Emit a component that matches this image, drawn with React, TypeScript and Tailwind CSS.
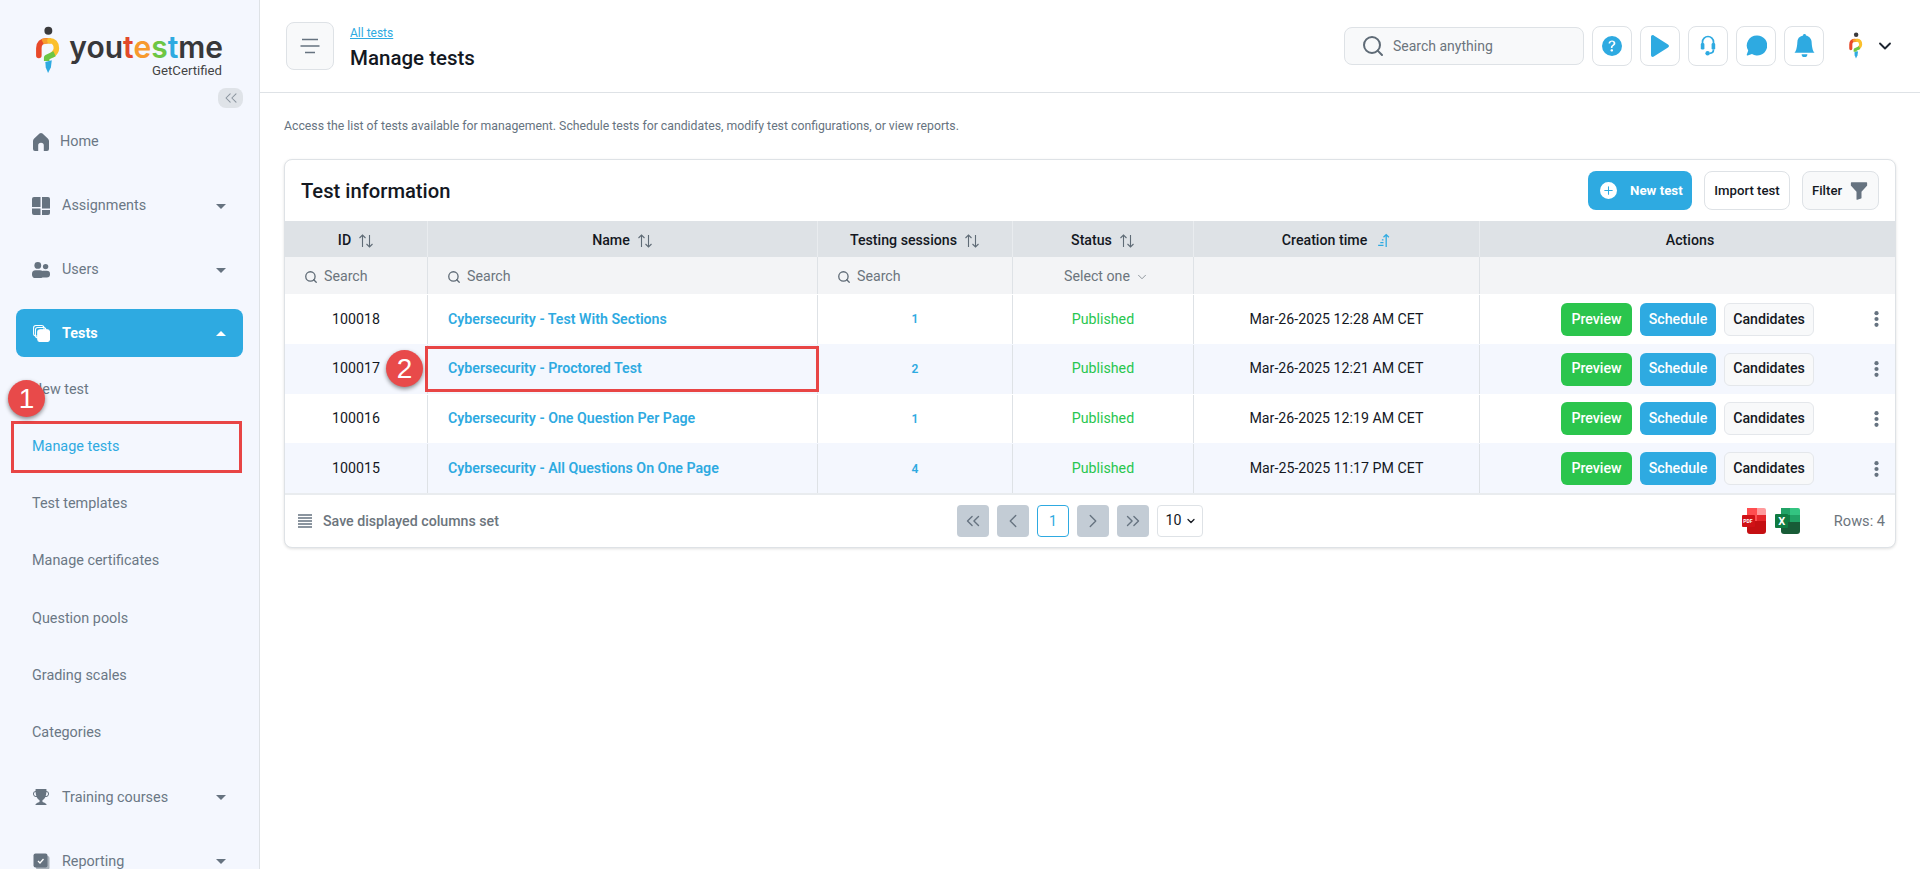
import { ChevronDown, ChevronLeft, ChevronRight, ChevronsLeft, ChevronsRight, Search } from "lucide-react";
import { BsBellFill, BsFunnelFill, BsPlusCircleFill, BsQuestionCircleFill, BsTrophyFill } from "react-icons/bs";

const columns = "grid grid-cols-[143px_390px_195px_181px_286px_1fr]";

const tests = [
    { id: "100018", name: "Cybersecurity - Test With Sections", sessions: "1", created: "Mar-26-2025 12:28 AM CET", alt: false },
    { id: "100017", name: "Cybersecurity - Proctored Test", sessions: "2", created: "Mar-26-2025 12:21 AM CET", alt: true },
    { id: "100016", name: "Cybersecurity - One Question Per Page", sessions: "1", created: "Mar-26-2025 12:19 AM CET", alt: false },
    { id: "100015", name: "Cybersecurity - All Questions On One Page", sessions: "4", created: "Mar-25-2025 11:17 PM CET", alt: true },
];

function LogoMark({ className }: { className: string }) {
    return (
        <svg viewBox="0 0 28 52" className={className} fill="none">
            <circle cx="13.3" cy="5.1" r="4.3" fill="#3a3a3c" />
            <path d="M3 32 V24 C3 19 6 16 11 16" stroke="#e8492a" strokeWidth="6" strokeLinecap="round" />
            <path d="M7 17 C9 16 12 16 16 16" stroke="#f79a2e" strokeWidth="6" />
            <path d="M15 16 C19 16 22 19 22 24 C22 27 20.5 29 18 31" stroke="#fbc02d" strokeWidth="6" strokeLinecap="round" />
            <path d="M20 30 L11.5 34 L11.5 38" stroke="#6cc644" strokeWidth="6" strokeLinejoin="round" />
            <path d="M10 39 L17 37 L16 45 L13 51 L10.5 45 Z" fill="#2eaae1" />
        </svg>
    );
}

function HomeIcon() {
    return (
        <svg viewBox="0 0 16 18" className="h-[18px] w-4" fill="#667380">
            <path d="M8 0 C8.6 0 9 0.2 9.5 0.6 L14.8 5.4 C15.6 6.1 16 7 16 8 V16 A2 2 0 0 1 14 18 H10.8 V12.5 A2.8 2.8 0 0 0 5.2 12.5 V18 H2 A2 2 0 0 1 0 16 V8 C0 7 0.4 6.1 1.2 5.4 L6.5 0.6 C7 0.2 7.4 0 8 0 Z" />
        </svg>
    );
}

function AssignIcon() {
    return (
        <svg viewBox="0 0 18 18" className="h-[18px] w-[18px]" fill="#667380">
            <path d="M2 0 H8.5 V10 H0 V2 A2 2 0 0 1 2 0 Z" />
            <path d="M10 0 H16 A2 2 0 0 1 18 2 V11.5 H10 Z" />
            <path d="M0 11.5 H8.5 V18 H2 A2 2 0 0 1 0 16 Z" />
            <path d="M10 13 H18 V16 A2 2 0 0 1 16 18 H10 Z" />
        </svg>
    );
}

function UsersIcon() {
    return (
        <svg viewBox="0 0 18 16" className="h-4 w-[18px]" fill="#667380">
            <circle cx="5.8" cy="3.4" r="3.4" />
            <circle cx="13.6" cy="4.6" r="2.7" />
            <rect x="0" y="8.2" width="11.5" height="7.8" rx="3.6" />
            <rect x="8" y="8.7" width="10" height="6.8" rx="3.2" />
        </svg>
    );
}

function TestsIcon() {
    return (
        <svg viewBox="0 0 18 18" className="h-[17px] w-[17px]" fill="none" stroke="#fff" strokeWidth="1.1">
            <rect x="0.6" y="0.6" width="11" height="11" rx="2.5" />
            <rect x="2.6" y="2.6" width="11" height="11" rx="2.5" />
            <rect x="5" y="5" width="12.5" height="12.5" rx="2.5" fill="#fff" />
        </svg>
    );
}

function ReportIcon() {
    return (
        <svg viewBox="0 0 17 17" className="h-[17px] w-[17px]" fill="none">
            <rect x="3" y="3" width="13.5" height="13.5" rx="2" fill="#a8b1ba" />
            <rect x="0.5" y="0.5" width="14" height="14" rx="2" fill="#667380" />
            <path d="M5 8 L7 10 L10.5 6" stroke="#fff" strokeWidth="1.3" />
        </svg>
    );
}

function NavItem({ icon, label, caret, gap }: { icon: React.ReactNode; label: string; caret?: boolean; gap: string }) {
    return (
        <div className="flex h-16 items-center pl-[32px] pt-[2px] text-[14.4px] text-[#6b7785]">
            <span className={`flex w-[18px] items-center justify-center ${gap}`}>{icon}</span>
            {label}
            {caret && <span className="ml-auto mr-[33px] h-0 w-0 border-x-[5px] border-t-[5px] border-x-transparent border-t-[#667380]" />}
        </div>
    );
}

function SubItem({ label, active }: { label: string; active?: boolean }) {
    return (
        <div className={`flex h-[57.2px] items-center pl-[32px] text-[14.4px] ${active ? "text-[#2eaae1]" : "text-[#6b7785]"}`}>
            {label}
        </div>
    );
}

function Sidebar() {
    return (
        <aside className="h-full w-[260px] shrink-0 overflow-hidden border-r border-[#dee2e6] bg-[#f4f7fe]">
            <div className="flex h-[88px] flex-col pl-[36px] pt-[26px]">
                <div className="flex items-start">
                    <LogoMark className="h-[48px] w-[26px] shrink-0" />
                    <div className="ml-[5px] flex w-[156px] flex-col items-end">
                        <div className="mt-[3px] font-['Inter',sans-serif] text-[30px] leading-[36px] font-semibold text-[#38383a]">
                            you<span className="text-[#e2492b]">t</span><span className="text-[#f79a2e]">e</span><span className="text-[#6cc644]">s</span><span className="text-[#2eaae1]">t</span>me
                        </div>
                        <div className="-mt-[2px] pr-[1px] text-[13.2px] leading-[15px] text-[#444]">GetCertified</div>
                    </div>
                </div>
            </div>
            <div className="flex justify-end pr-4">
                <div className="flex h-5 w-[25px] items-center justify-center rounded-lg bg-[#dfe3e8]">
                    <ChevronsLeft className="h-5 w-5 text-[#8a949e]" strokeWidth={1.25} />
                </div>
            </div>
            <div className="h-px" />
            <NavItem icon={<HomeIcon />} label="Home" gap="mr-[10px]" />
            <NavItem icon={<AssignIcon />} label="Assignments" caret gap="mr-[12px]" />
            <NavItem icon={<UsersIcon />} label="Users" caret gap="mr-[12px]" />
            <div className="flex h-16 items-center px-4">
                <div className="flex h-[48px] w-full items-center rounded-lg bg-[#2eaae1] pl-4 pt-[1px] text-[14.4px] font-bold text-white">
                    <span className="mr-[12px] flex w-[18px] justify-center"><TestsIcon /></span>
                    Tests
                    <span className="ml-auto mr-[17px] h-0 w-0 border-x-[5px] border-b-[5px] border-x-transparent border-b-white" />
                </div>
            </div>
            <div className="-mt-1">
                <SubItem label="New test" />
                <SubItem label="Manage tests" active />
                <SubItem label="Test templates" />
                <SubItem label="Manage certificates" />
                <SubItem label="Question pools" />
                <SubItem label="Grading scales" />
                <SubItem label="Categories" />
            </div>
            <div className="h-[3px]" />
            <NavItem icon={<BsTrophyFill className="h-[16px] w-[16px] text-[#667380]" />} label="Training courses" caret gap="mr-[12px]" />
            <NavItem icon={<ReportIcon />} label="Reporting" caret gap="mr-[12px]" />
        </aside>
    );
}

function IconBox({ children }: { children: React.ReactNode }) {
    return (
        <div className="flex h-10 w-10 items-center justify-center rounded-lg border border-[#dee2e6] bg-white text-[#2eaae1]">
            {children}
        </div>
    );
}

function TopBar() {
    return (
        <header className="flex h-[93px] shrink-0 items-center border-b border-[#dee2e6] pb-[1px] pl-[26px] pr-[25px]">
            <div className="flex h-12 w-12 items-center justify-center rounded-lg border border-[#dee2e6] bg-[#f8f9fa]">
                <svg viewBox="0 0 20 16" className="h-4 w-5" fill="none" stroke="#667380" strokeWidth="1.7">
                    <path d="M2 1.5 H18 M0.5 8 H19.5 M5 14.5 H15" />
                </svg>
            </div>
            <div className="ml-4 flex flex-col">
                <a className="mt-[4px] text-xs leading-[16px] text-[#2eaae1] underline">All tests</a>
                <h1 className="mt-[4px] text-[20.5px] leading-[26px] font-medium text-[#14181f]">Manage tests</h1>
            </div>
            <div className="ml-auto flex h-[38px] w-[240px] items-center rounded-lg border border-[#dee2e6] bg-[#f8f9fa] pl-[16px] text-sm text-[#6c757d]">
                <Search className="mr-2 h-6 w-6 text-[#5f6b76]" strokeWidth={2} />
                Search anything
            </div>
            <div className="ml-[8px] flex gap-2">
                <IconBox><BsQuestionCircleFill className="h-5 w-5" /></IconBox>
                <IconBox>
                    <svg viewBox="0 0 18 22" className="h-[22px] w-[18px]" fill="#2eaae1">
                        <path d="M0 2 C0 0.4 1.5 -0.4 2.8 0.4 L17 9.5 C18.3 10.3 18.3 11.7 17 12.5 L2.8 21.6 C1.5 22.4 0 21.6 0 20 Z" />
                    </svg>
                </IconBox>
                <IconBox>
                    <svg viewBox="0 0 16 21" className="h-[21px] w-4" fill="none" stroke="#2eaae1" strokeWidth="1.7">
                        <path d="M2.5 8.5 V7 A5.5 5.5 0 0 1 13.5 7 V8.5" />
                        <rect x="0.8" y="8" width="3.6" height="6.6" rx="1.4" fill="#2eaae1" stroke="none" />
                        <rect x="11.6" y="8" width="3.6" height="6.6" rx="1.4" fill="#2eaae1" stroke="none" />
                        <path d="M13.5 14.5 C13.5 17 12 18.3 9.5 18.3" />
                        <circle cx="7.6" cy="18.3" r="2.2" fill="#2eaae1" stroke="none" />
                    </svg>
                </IconBox>
                <IconBox>
                    <svg viewBox="0 0 21 21" className="h-[21px] w-[21px]" fill="#2eaae1">
                        <path d="M11 0.5 A10 10 0 1 1 6 19 L1.6 20.4 A0.7 0.7 0 0 1 0.8 19.5 L2.2 15.6 A10 10 0 0 1 11 0.5 Z" />
                    </svg>
                </IconBox>
                <IconBox><BsBellFill className="h-[23px] w-[23px]" /></IconBox>
            </div>
            <LogoMark className="ml-[25px] h-[27px] w-[15px]" />
            <ChevronDown className="ml-[11px] h-5 w-5 text-[#1d2530]" strokeWidth={2.25} />
        </header>
    );
}

function SortIcon() {
    return (
        <svg viewBox="0 0 16 16" className="ml-[7px] h-4 w-4" fill="none" stroke="#5f6b76" strokeWidth="1.1">
            <path d="M4.5 14 V2 M1.5 5 L4.5 2 L7.5 5 M11.5 2 V14 M8.5 11 L11.5 14 L14.5 11" />
        </svg>
    );
}

function HeaderCell({ label, sort, border = true, className = "" }: { label: string; sort?: React.ReactNode; border?: boolean; className?: string }) {
    return (
        <div className={`flex items-center justify-center pt-[3px] text-[14.2px] font-medium text-[#14181f] ${border ? "border-r border-[#e9ecef]" : ""} ${className}`}>
            {label}
            {sort}
        </div>
    );
}

function FilterSearch() {
    return (
        <div className="flex items-center border-r border-[#dee2e6] pl-[19px] pt-[3px] text-[14.2px] text-[#6c757d]">
            <Search className="mr-[6px] h-[14px] w-[14px] text-[#5f6b76]" strokeWidth={2.25} />
            Search
        </div>
    );
}

function PageButton({ children }: { children: React.ReactNode }) {
    return (
        <div className="flex h-8 w-8 items-center justify-center rounded-[4px] bg-[#c3ccd5] text-[#667380]">
            {children}
        </div>
    );
}

function PdfIcon() {
    return (
        <svg viewBox="0 0 24 26" className="h-[26px] w-[24px]">
            <path d="M5 0 H15 V13 H5 Z" fill="#ff4d4f" />
            <path d="M15 0 H22 A2 2 0 0 1 24 2 V7 H15 Z" fill="#ff9a9c" />
            <path d="M15 7 H24 V14 H15 Z" fill="#e5262a" />
            <path d="M5 13 H24 V23 A3 3 0 0 1 21 26 H8 A3 3 0 0 1 5 23 Z" fill="#c50f12" />
            <rect x="0" y="7" width="13" height="12" rx="1" fill="#d01116" />
            <text x="1.2" y="15" fontSize="5" fontWeight="700" fill="#fff" fontFamily="Roboto, sans-serif">PDF</text>
        </svg>
    );
}

function ExcelIcon() {
    return (
        <svg viewBox="0 0 25 26" className="h-[26px] w-[25px]">
            <path d="M6 0 H15 V7 H6 Z" fill="#21a366" />
            <path d="M15 0 H23 A2 2 0 0 1 25 2 V7 H15 Z" fill="#33c481" />
            <path d="M6 7 H15 V14 H6 Z" fill="#107c41" />
            <path d="M15 7 H25 V14 H15 Z" fill="#21a366" />
            <path d="M6 14 H25 V23 A3 3 0 0 1 22 26 H9 A3 3 0 0 1 6 23 Z" fill="#185c37" />
            <rect x="0" y="6" width="13" height="14" rx="1" fill="#0f7b41" />
            <text x="3.2" y="17" fontSize="11" fontWeight="700" fill="#fff" fontFamily="Roboto, sans-serif">X</text>
        </svg>
    );
}

function TestTable() {
    return (
        <section className="rounded-lg border border-[#dee2e6] bg-white shadow-[0_1px_3px_rgba(0,0,0,0.12)]">
            <div className="flex h-[61px] items-center px-4">
                <h2 className="pt-[2px] text-[20.2px] font-medium text-[#14181f]">Test information</h2>
                <div className="ml-auto flex items-center gap-3">
                    <button className="flex h-[39px] w-[104px] items-center rounded-lg bg-[#2eaae1] pl-3 text-[13.3px] font-bold text-white">
                        <BsPlusCircleFill className="mr-[13px] h-[17px] w-[17px]" />
                        New test
                    </button>
                    <button className="flex h-[39px] w-[86px] items-center justify-center rounded-lg border border-[#dee2e6] bg-white text-[13.2px] font-medium text-[#14181f]">
                        Import test
                    </button>
                    <button className="flex h-[39px] w-[77px] items-center rounded-lg border border-[#dee2e6] bg-[#f8f9fa] pl-[9px] text-[13.2px] font-medium text-[#14181f]">
                        Filter
                        <BsFunnelFill className="ml-[7px] h-5 w-5 text-[#667380]" />
                    </button>
                </div>
            </div>
            <div className={`${columns} h-[36px] bg-[#dee2e6]`}>
                <HeaderCell label="ID" sort={<SortIcon />} />
                <HeaderCell label="Name" sort={<SortIcon />} />
                <HeaderCell label="Testing sessions" sort={<SortIcon />} />
                <HeaderCell label="Status" sort={<SortIcon />} />
                <HeaderCell
                    label="Creation time"
                    sort={
                        <svg viewBox="0 0 14 14" className="ml-[9px] h-[15px] w-[15px]" fill="none" stroke="#2eaae1" strokeWidth="1.2">
                            <path d="M9.5 13 V1.5 M7 4 L9.5 1.5 L12 4 M5.5 6.5 H7 M4 9 H7 M2 11.5 H7" />
                        </svg>
                    }
                />
                <HeaderCell label="Actions" border={false} className="pl-[5px]" />
            </div>
            <div className={`${columns} h-[37px] bg-[#f3f4f6]`}>
                <FilterSearch />
                <FilterSearch />
                <FilterSearch />
                <div className="flex items-center justify-center border-r border-[#dee2e6] pl-[7px] pt-[3px] text-[14.2px] text-[#6c757d]">
                    Select one
                    <ChevronDown className="ml-[5px] h-[14px] w-[14px]" strokeWidth={1.25} />
                </div>
                <div className="border-r border-[#dee2e6]" />
                <div />
            </div>
            {tests.map((test) => (
                <div key={test.id} className={`${columns} h-[49.75px] pt-[1px] text-[14.2px] ${test.alt ? "bg-[#f4f7fe]" : "bg-white"}`}>
                    <div className="flex items-center justify-center border-r border-[#dee2e6] text-[#14181f]">{test.id}</div>
                    <div className="flex items-center border-r border-[#dee2e6] pl-[20px] font-semibold text-[#2eaae1]">{test.name}</div>
                    <div className="flex items-center justify-center border-r border-[#dee2e6] text-xs font-semibold text-[#2eaae1]">{test.sessions}</div>
                    <div className="flex items-center justify-center border-r border-[#dee2e6] text-[#28c64f]">Published</div>
                    <div className="flex items-center justify-center border-r border-[#dee2e6] text-[#14181f]">{test.created}</div>
                    <div className="flex items-center pl-[81px]">
                        <button className="h-[33px] w-[71px] rounded-md bg-[#2bc54d] font-medium text-white">Preview</button>
                        <button className="ml-2 h-[33px] w-[76px] rounded-md bg-[#2eaae1] font-medium text-white">Schedule</button>
                        <button className="ml-2 h-[33px] w-[90px] rounded-md border border-[#e4e7eb] bg-[#f8f9fa] font-medium text-[#14181f]">Candidates</button>
                        <svg viewBox="0 0 5 16" className="ml-[60px] h-4 w-[5px]" fill="#667380">
                            <circle cx="2.5" cy="2.2" r="2.1" />
                            <circle cx="2.5" cy="8" r="2.1" />
                            <circle cx="2.5" cy="13.8" r="2.1" />
                        </svg>
                    </div>
                </div>
            ))}
            <div className="flex h-[54px] items-center border-t-2 border-[#e9ecef] pl-[13px] pr-[10px]">
                <svg viewBox="0 0 14 14" className="h-[14px] w-[14px]" fill="none" stroke="#667380" strokeWidth="1.4">
                    <path d="M0 1 H14 M0 4 H14 M0 7 H14 M0 10 H14 M0 13 H14" />
                </svg>
                <span className="ml-[11px] pt-[1px] text-[14.2px] font-medium text-[#6c757d]">Save displayed columns set</span>
                <div className="ml-[458px] flex items-center gap-2">
                    <PageButton><ChevronsLeft className="h-[22px] w-[22px]" strokeWidth={1.5} /></PageButton>
                    <PageButton><ChevronLeft className="h-[22px] w-[22px]" strokeWidth={1.5} /></PageButton>
                    <div className="flex h-8 w-8 items-center justify-center rounded-[4px] border border-[#2eaae1] bg-white text-sm text-[#2eaae1]">1</div>
                    <PageButton><ChevronRight className="h-[22px] w-[22px]" strokeWidth={1.5} /></PageButton>
                    <PageButton><ChevronsRight className="h-[22px] w-[22px]" strokeWidth={1.5} /></PageButton>
                    <div className="flex h-8 w-[46px] items-center justify-center rounded-[4px] border border-[#dee2e6] bg-white pl-[3px] text-[14.2px] text-[#14181f]">
                        10
                        <ChevronDown className="ml-[4px] h-[12px] w-[12px]" strokeWidth={2.5} />
                    </div>
                </div>
                <div className="ml-auto flex items-center gap-[9px]">
                    <PdfIcon />
                    <ExcelIcon />
                    <span className="ml-[25px] pt-[1px] text-[14.6px] text-[#6c757d]">Rows: 4</span>
                </div>
            </div>
        </section>
    );
}

export default function App() {
    return (
        <div className="relative flex h-screen w-full overflow-hidden bg-white font-['Roboto',sans-serif]">
            <Sidebar />
            <main className="flex min-w-0 flex-1 flex-col">
                <TopBar />
                <div className="px-6">
                    <p className="mt-[25px] text-[12.25px] leading-[16px] text-[#667380]">
                        Access the list of tests available for management. Schedule tests for candidates, modify test configurations, or view reports.
                    </p>
                    <div className="mt-[25px]">
                        <TestTable />
                    </div>
                </div>
            </main>

            {/* tutorial callouts drawn over the page */}
            <div className="absolute left-[11px] top-[421px] h-[52px] w-[231px] border-[3px] border-[#e84545]" />
            <div className="absolute left-[8px] top-[380px] flex h-[37px] w-[37px] items-center justify-center rounded-full bg-[#e84a4a] font-['Liberation_Sans',sans-serif] text-[28px] text-white shadow-[0_2px_4px_rgba(0,0,0,0.45)]">1</div>
            <div className="absolute left-[425px] top-[346px] h-[46px] w-[394px] border-[3px] border-[#e84545]" />
            <div className="absolute left-[386px] top-[350px] flex h-[37px] w-[37px] items-center justify-center rounded-full bg-[#e84a4a] font-['Liberation_Sans',sans-serif] text-[28px] text-white shadow-[0_2px_4px_rgba(0,0,0,0.45)]">2</div>
        </div>
    );
}
